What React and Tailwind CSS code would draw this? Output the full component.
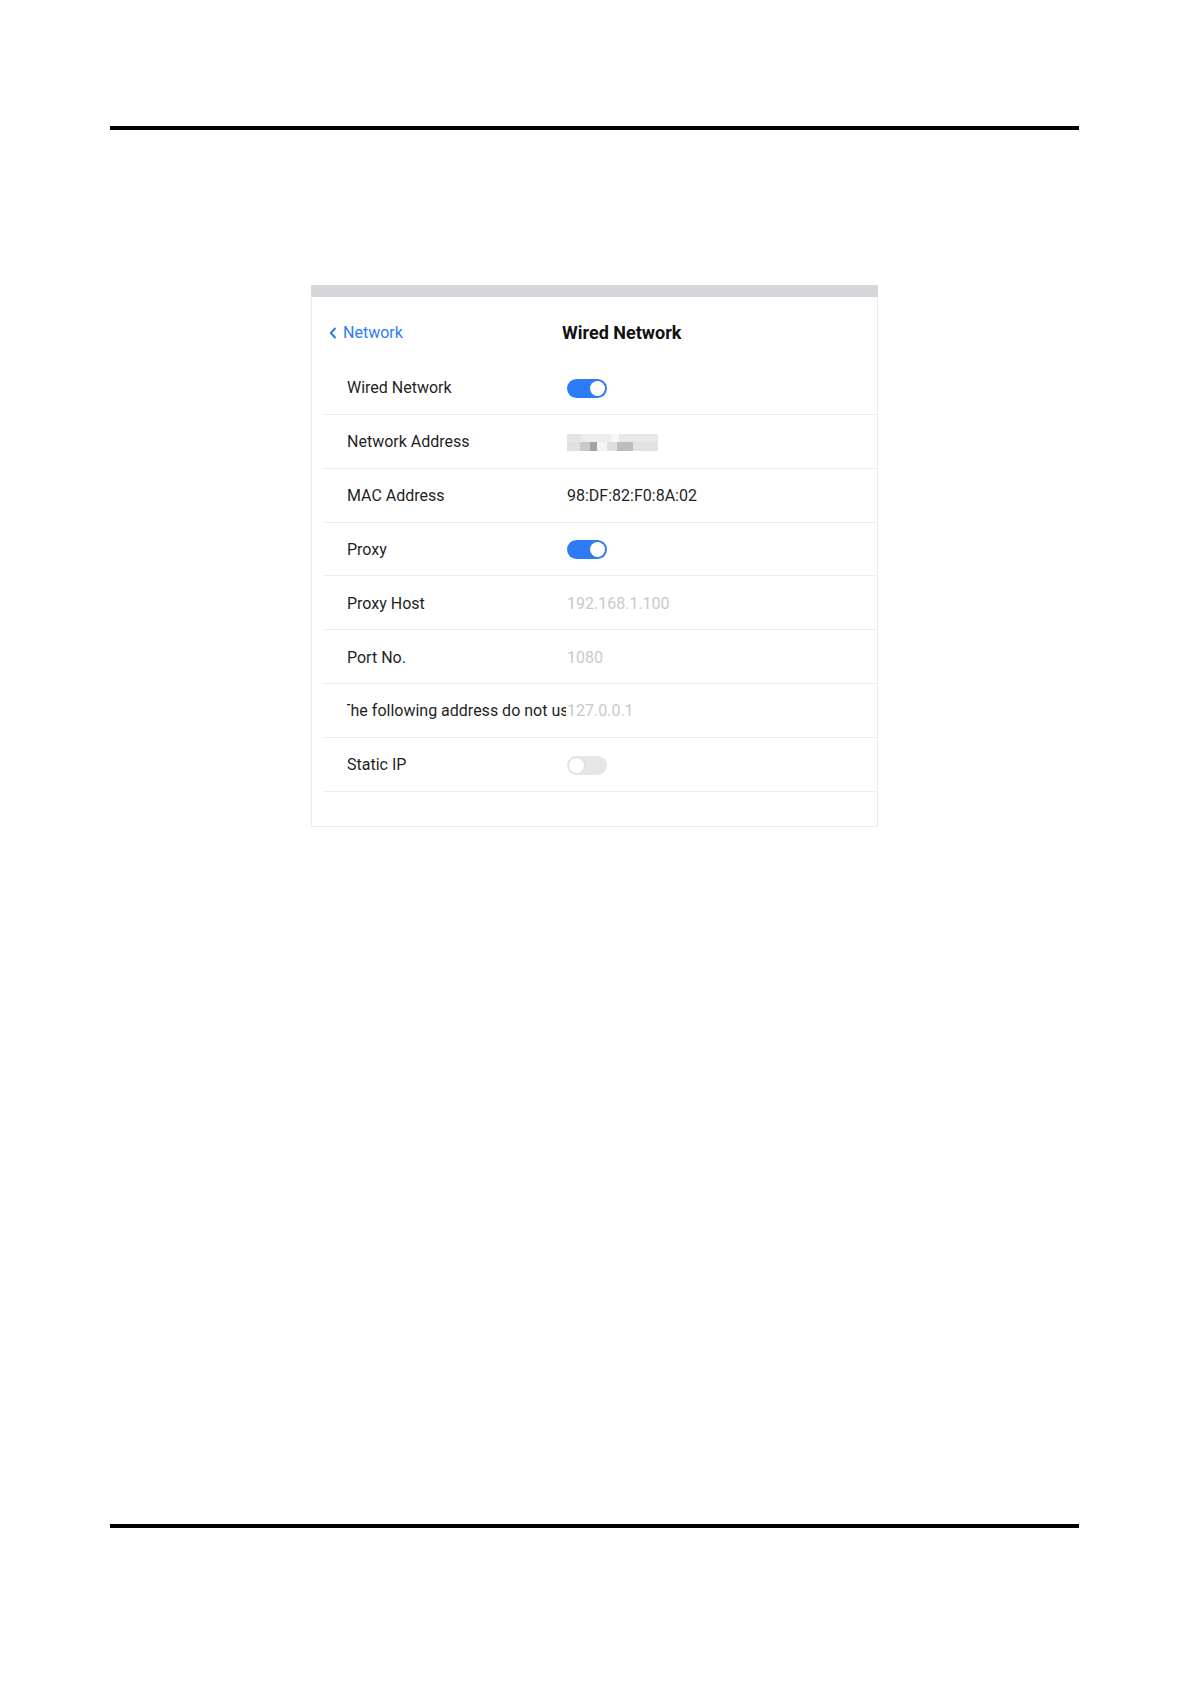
const rows = [
    { label: "Wired Network", type: "toggle", on: true },
    { label: "Network Address", type: "blur" },
    { label: "MAC Address", type: "text", value: "98:DF:82:F0:8A:02" },
    { label: "Proxy", type: "toggle", on: true },
    { label: "Proxy Host", type: "hint", value: "192.168.1.100" },
    { label: "Port No.", type: "hint", value: "1080" },
    { label: "The following address do not use", type: "hint", value: "127.0.0.1", clipped: true },
    { label: "Static IP", type: "toggle", on: false },
]

function Toggle({ on }) {
    if (on) {
        return (
            <div className="flex items-center justify-end w-[40px] h-[19px] rounded-full bg-[#2d7cf6] pr-[2px]">
                <div className="w-[15px] h-[15px] rounded-full bg-white" />
            </div>
        )
    }
    return (
        <div className="flex items-center w-[40px] h-[19px] rounded-full bg-[#e6e6e6] pl-[1px]">
            <div className="w-[17px] h-[17px] rounded-full bg-white border border-[#dcdcdc]" />
        </div>
    )
}

function Blurred() {
    return (
        <div className="flex flex-col w-[91px] h-[17px]">
            <div className="flex h-[8px]">
                <div className="w-[14px] bg-[#e4e4e4]" />
                <div className="w-[30px] bg-[#ececec]" />
                <div className="w-[8px] bg-[#f6f6f6]" />
                <div className="w-[39px] bg-[#e8e8e8]" />
            </div>
            <div className="flex h-[9px]">
                <div className="w-[13px] bg-[#e0e0e0]" />
                <div className="w-[10px] bg-[#c9c9c9]" />
                <div className="w-[7px] bg-[#a3a3a3]" />
                <div className="w-[10px] bg-[#f4f4f4]" />
                <div className="w-[10px] bg-[#dedede]" />
                <div className="w-[16px] bg-[#bdbdbd]" />
                <div className="w-[25px] bg-[#e2e2e2]" />
            </div>
        </div>
    )
}

function Row({ label, type, on, value, clipped }) {
    return (
        <div className="flex flex-row items-center h-[53.85px] border-b border-[#ededed] pl-[23px] pt-[2px]">
            <div className="w-[219px] mr-[1px] overflow-hidden whitespace-nowrap text-[16px] text-[#1f1f1f]">
                {clipped ? <span className="inline-block -ml-[6px]">{label}</span> : label}
            </div>
            {type === "toggle" && <Toggle on={on} />}
            {type === "blur" && <Blurred />}
            {type === "text" && <span className="text-[16px] text-[#1f1f1f]">{value}</span>}
            {type === "hint" && <span className="text-[16px] text-[#c9c9c9]">{value}</span>}
        </div>
    )
}

export default function App() {
    return (
        <div className="w-[1191px] h-[1684px] bg-white flex flex-col" style={{ fontFamily: "Roboto, 'Noto Sans', sans-serif" }}>
            <div className="mt-[126px] ml-[110px] w-[969px] h-[4px] bg-black" />

            <div className="mt-[155px] ml-[311px] w-[567px] flex flex-col">
                <div className="h-[12px] bg-[#d5d6d9]" />
                <div className="flex flex-col border-l border-r border-b border-[#ececec] pb-[34px]">
                    {/* header bar */}
                    <div className="flex flex-row items-center h-[64px] pt-[7px] pl-[17px]">
                        <div className="flex flex-row items-center gap-[6px] w-[233px] text-[16px] text-[#2d7cf6]">
                            <svg width="8" height="12" viewBox="0 0 8 12" fill="none">
                                <polyline points="6,1.5 1.8,6 6,10.5" stroke="#2d7cf6" strokeWidth="2" strokeLinecap="round" strokeLinejoin="round" />
                            </svg>
                            <span>Network</span>
                        </div>
                        <span className="text-[18px] font-bold text-[#111]">Wired Network</span>
                    </div>

                    <div className="flex flex-col ml-[12px]">
                        {rows.map((row, index) => (
                            <Row key={index} {...row} />
                        ))}
                    </div>
                </div>
            </div>

            <div className="mt-[697px] ml-[110px] w-[969px] h-[4px] bg-black" />
        </div>
    )
}
